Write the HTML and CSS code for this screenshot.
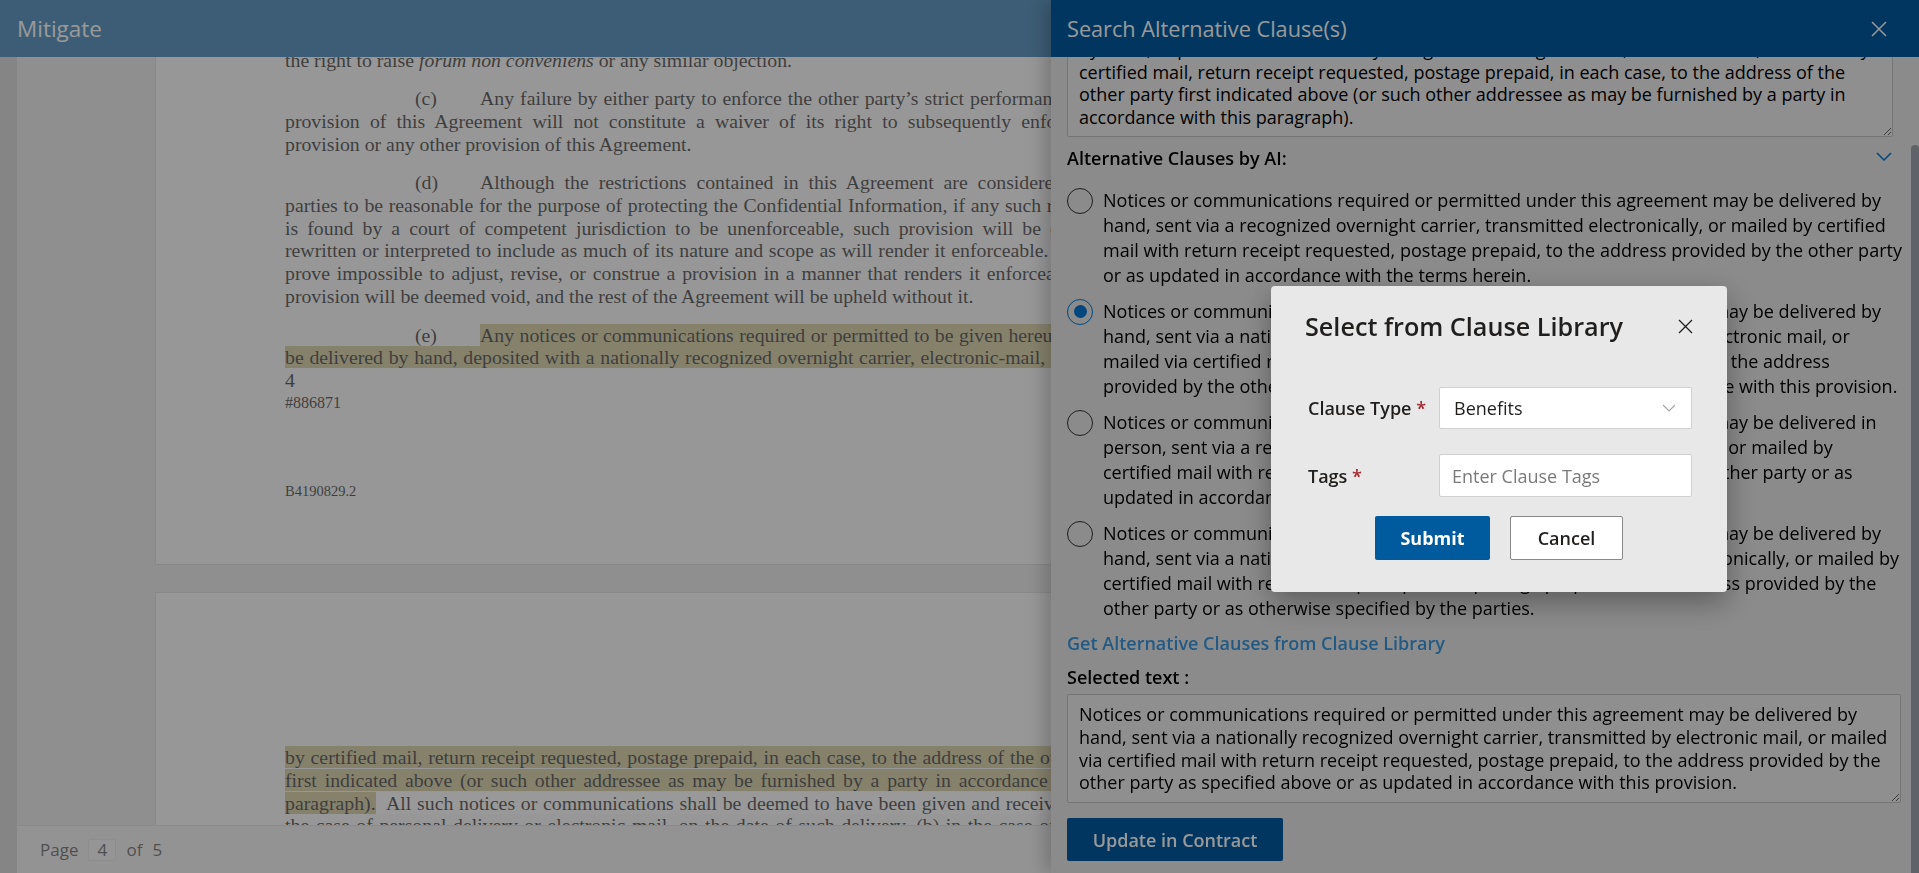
FILE: index.html
```html
<!DOCTYPE html>
<html lang="en">
<head>
<meta charset="utf-8">
<title>Mitigate</title>
<link rel="stylesheet" href="styles.css">
</head>
<body>
<div class="app">
  <header class="topbar"><span class="brand">Mitigate</span></header>
  <div class="workspace">
    <div class="rail"></div>
    <main class="viewer">
      <div class="pages">
        <div class="scroll">
          <section class="page page-1">
            <div class="para">
              <div class="ln">the right to raise <i>forum non conveniens</i> or any similar objection.</div>
            </div>
            <div class="para">
              <div class="ln j"><span class="num">(c)</span>Any failure by either party to enforce the other party’s strict performance of any</div>
              <div class="ln j">provision of this Agreement will not constitute a waiver of its right to subsequently enforce such</div>
              <div class="ln">provision or any other provision of this Agreement.</div>
            </div>
            <div class="para">
              <div class="ln j"><span class="num">(d)</span>Although the restrictions contained in this Agreement are considered by the</div>
              <div class="ln j">parties to be reasonable for the purpose of protecting the Confidential Information, if any such restriction</div>
              <div class="ln j">is found by a court of competent jurisdiction to be unenforceable, such provision will be construed</div>
              <div class="ln j">rewritten or interpreted to include as much of its nature and scope as will render it enforceable. Should it</div>
              <div class="ln j">prove impossible to adjust, revise, or construe a provision in a manner that renders it enforceable, such</div>
              <div class="ln">provision will be deemed void, and the rest of the Agreement will be upheld without it.</div>
            </div>
            <div class="para">
              <div class="ln j"><span class="num">(e)</span><mark class="hl">Any notices or communications required or permitted to be given hereunder may</mark></div>
              <div class="ln j"><mark class="hl">be delivered by hand, deposited with a nationally recognized overnight carrier, electronic-mail, or mailed</mark></div>
            </div>
            <div class="ln">4</div>
            <div class="ln ref">#886871</div>
            <div class="ln docid">B4190829.2</div>
          </section>
          <section class="page page-2">
            <div class="ln j"><mark class="hl">by certified mail, return receipt requested, postage prepaid, in each case, to the address of the other party</mark></div>
            <div class="ln j"><mark class="hl">first indicated above (or such other addressee as may be furnished by a party in accordance with this</mark></div>
            <div class="ln j"><mark class="hl">paragraph).</mark><span class="sel">&nbsp; All such notices or communications shall be deemed to have been given and received: (a) in</span></div>
            <div class="ln j">the case of personal delivery or electronic mail, on the date of such delivery, (b) in the case of delivery</div>
          </section>
        </div>
      </div>
      <footer class="pager">
        <span>Page</span>
        <span class="page-box">4</span>
        <span>of</span>
        <span>5</span>
      </footer>
    </main>
  </div>
</div>

<div class="dim-light"></div>

<aside class="panel">
  <div class="panel-head">
    <h2 class="panel-title">Search Alternative Clause(s)</h2>
    <button class="icon-btn" aria-label="Close">
      <svg width="16" height="16" viewBox="0 0 16 16"><path d="M1 1L15 15M15 1L1 15" stroke="#fff" stroke-width="1.5" fill="none"/></svg>
    </button>
  </div>
  <div class="panel-body">
    <div class="panel-scroll">
      <textarea class="clause-box original" readonly>Any notices or communications required or permitted to be given hereunder may be delivered by hand, deposited with a nationally recognized overnight carrier, electronic-mail, or mailed by certified mail, return receipt requested, postage prepaid, in each case, to the address of the other party first indicated above (or such other addressee as may be furnished by a party in accordance with this paragraph).</textarea>

      <div class="section-head">
        <span>Alternative Clauses by AI:</span>
        <svg class="chev" width="16" height="9" viewBox="0 0 16 9"><path d="M1 1L8 8L15 1" stroke="#0078d4" stroke-width="1.5" fill="none"/></svg>
      </div>

      <div class="options">
        <div class="option">
          <span class="radio"></span>
          <span class="option-text">Notices or communications required or permitted under this agreement may be delivered by hand, sent via a recognized overnight carrier, transmitted electronically, or mailed by certified mail with return receipt requested, postage prepaid, to the address provided by the other party or as updated in accordance with the terms herein.</span>
        </div>
        <div class="option">
          <span class="radio checked"></span>
          <span class="option-text">Notices or communications required or permitted under this agreement may be delivered by hand, sent via a nationally recognized overnight carrier, transmitted by electronic mail, or mailed via certified mail with return receipt requested, postage prepaid, to the address provided by the other party as specified above or as updated in accordance with this provision.</span>
        </div>
        <div class="option">
          <span class="radio"></span>
          <span class="option-text">Notices or communications required or permitted under this agreement may be delivered in person, sent via a recognized overnight courier, transmitted electronically, or mailed by certified&nbsp;mail with return receipt requested, postage prepaid, to the said other party or as updated in accordance with this agreement.</span>
        </div>
        <div class="option">
          <span class="radio"></span>
          <span class="option-text">Notices or communications required or permitted under this agreement may be delivered by hand, sent via a nationally recognized overnight carrier, transmitted electronically, or mailed by certified mail with return receipt requested, postage prepaid, to the address provided by the other party or as otherwise specified by the parties.</span>
        </div>
      </div>

      <a class="library-link">Get Alternative Clauses from Clause Library</a>
      <div class="field-label">Selected text :</div>
      <textarea class="clause-box selected" readonly>Notices or communications required or permitted under this agreement may be delivered by hand, sent via a nationally recognized overnight carrier, transmitted by electronic mail, or mailed via certified mail with return receipt requested, postage prepaid, to the address provided by the other party as specified above or as updated in accordance with this provision.</textarea>
      <button class="btn-primary update">Update in Contract</button>
    </div>
    <div class="scrollbar"></div>
  </div>
</aside>

<div class="dim-dark"></div>

<div class="modal" role="dialog" aria-labelledby="modal-title">
  <div class="modal-head">
    <h3 class="modal-title" id="modal-title">Select from Clause Library</h3>
    <button class="icon-btn" aria-label="Close">
      <svg width="15" height="15" viewBox="0 0 15 15"><path d="M1 1L14 14M14 1L1 14" stroke="#201f1e" stroke-width="1.3" fill="none"/></svg>
    </button>
  </div>
  <div class="form">
    <label class="form-label">Clause Type <span class="req">*</span></label>
    <div class="select">
      <span>Benefits</span>
      <svg width="14" height="8" viewBox="0 0 14 8"><path d="M1 1L7 7L13 1" stroke="#a6a6a6" stroke-width="1.2" fill="none"/></svg>
    </div>
    <label class="form-label">Tags <span class="req">*</span></label>
    <input class="input" type="text" placeholder="Enter Clause Tags">
  </div>
  <div class="actions">
    <button class="btn-primary submit">Submit</button>
    <button class="btn-default cancel">Cancel</button>
  </div>
</div>
</body>
</html>
```

FILE: styles.css
```css
* { box-sizing: border-box; }

html, body {
  margin: 0;
  height: 100%;
}

body {
  font-family: "Open Sans", "Noto Sans", sans-serif;
  overflow: hidden;
  background: #e6e6e6;
  color: #000;
}

button, input, textarea {
  font-family: inherit;
}

/* ---------- application ---------- */
.app {
  height: 100vh;
  display: flex;
  flex-direction: column;
}

.topbar {
  height: 57px;
  flex: none;
  background: #005a9e;
  display: flex;
  align-items: center;
  padding-left: 17px;
}

.brand {
  color: #fff;
  font-size: 22.5px;
}

.workspace {
  flex: 1;
  display: flex;
  min-height: 0;
}

.rail {
  width: 17px;
  flex: none;
  background: #c8c8c8;
}

.viewer {
  flex: 1;
  min-width: 0;
  display: flex;
  flex-direction: column;
  background: #e4e4e4;
}

.pages {
  flex: 1;
  min-height: 0;
  overflow: hidden;
}

.scroll {
  margin-top: -60px;
  padding-left: 138px;
}

.page {
  width: 1102px;
  background: #fafafa;
  border: 1px solid #d0d0d0;
  padding-left: 129px;
  font-family: "Liberation Serif", "Times New Roman", serif;
  font-size: 19.8px;
  line-height: 22.7px;
  color: #000;
}

.page-1 {
  padding-top: 50.65px;
  padding-bottom: 61px;
}

.page-2 {
  margin-top: 27px;
  padding-top: 153.35px;
  height: 1426px;
}

.para + .para { margin-top: 16px; }

.ln {
  width: 842px;
  height: 22.7px;
  overflow: hidden;
}

.j {
  text-align: justify;
  text-align-last: justify;
}

.num {
  display: inline-block;
  margin-left: 130px;
  width: 65px;
  text-align: left;
  text-align-last: left;
}

.hl {
  background: #cbbf80;
  color: inherit;
}

.sel { background: #fff; }

.ref { font-size: 16px; }

.docid {
  font-size: 14.5px;
  margin-top: 65.9px;
}

.pager {
  height: 48px;
  flex: none;
  background: #f0f0f0;
  border-top: 1px solid #d8d8d8;
  display: flex;
  align-items: center;
  gap: 10px;
  padding-left: 23px;
  font-size: 17px;
  color: #323130;
}

.page-box {
  width: 28px;
  height: 22px;
  display: flex;
  align-items: center;
  justify-content: center;
  background: #f4f4f4;
  border: 1px solid #e0e0e0;
  border-radius: 2px;
}

/* ---------- overlays ---------- */
.dim-light {
  position: fixed;
  inset: 0;
  background: rgba(255, 255, 255, 0.4);
  z-index: 1;
}

.dim-dark {
  position: fixed;
  inset: 0;
  background: rgba(0, 0, 0, 0.4);
  z-index: 3;
}

/* ---------- side panel ---------- */
.panel {
  position: fixed;
  top: 0;
  right: 0;
  bottom: 0;
  width: 868px;
  background: #e8e8e8;
  box-shadow: -6px 0 18px rgba(0, 0, 0, 0.22);
  display: flex;
  flex-direction: column;
  z-index: 2;
}

.panel-head {
  height: 57px;
  flex: none;
  background: #005a9e;
  display: flex;
  align-items: center;
  justify-content: space-between;
  padding: 0 32px 0 16px;
}

.panel-title {
  margin: 0;
  font-size: 21.7px;
  font-weight: 400;
  color: #fff;
}

.icon-btn {
  border: 0;
  padding: 0;
  background: none;
  display: flex;
}

.panel-body {
  flex: 1;
  position: relative;
  overflow: hidden;
}

.panel-scroll {
  margin-top: -50.5px;
  padding-left: 16px;
  font-size: 18px;
  line-height: 22.5px;
}

.clause-box {
  display: block;
  font-size: 18px;
  line-height: 22.5px;
  color: #000;
  background: #efefef;
  border: 1px solid #c4c4c4;
  border-radius: 2px;
  padding: 8px 14px 8px 11px;
  resize: vertical;
  overflow: hidden;
  outline: none;
}

.original {
  width: 826px;
  height: 130.5px;
}

.section-head {
  width: 826px;
  margin-top: 9.75px;
  display: flex;
  justify-content: space-between;
  align-items: center;
  font-weight: 600;
}

.chev {
  margin-top: -4px;
  margin-right: 1px;
}

.options {
  margin-top: 19px;
  width: 842px;
}

.option {
  display: flex;
  gap: 10px;
  margin-bottom: 11px;
  line-height: 25px;
}

.radio {
  position: relative;
  flex: none;
  width: 26px;
  height: 26px;
  margin-top: -0.5px;
  border: 1.5px solid #323130;
  border-radius: 50%;
  background: transparent;
}

.radio.checked { border-color: #0078d4; }

.radio.checked::after {
  content: "";
  position: absolute;
  inset: 5.5px;
  border-radius: 50%;
  background: #0078d4;
}

.library-link {
  display: block;
  margin-top: 4px;
  font-weight: 600;
  color: #3a96dd;
  cursor: pointer;
}

.field-label {
  margin-top: 11px;
  font-weight: 600;
}

.selected {
  width: 834px;
  height: 109px;
  margin-top: 6px;
  line-height: 22.7px;
  padding-right: 10px;
}

.btn-primary {
  border: 0;
  border-radius: 2px;
  background: #005a9e;
  color: #fff;
  font-size: 18px;
  font-weight: 600;
}

.update {
  margin-top: 15px;
  width: 216px;
  height: 43px;
  display: block;
}

.scrollbar {
  position: absolute;
  right: 0;
  top: 88px;
  bottom: 0;
  width: 8px;
  background: #9ea6b0;
  border-radius: 4px 4px 0 0;
}

/* ---------- modal ---------- */
.modal {
  position: fixed;
  left: 1271px;
  top: 286px;
  width: 456px;
  height: 306px;
  background: #e8e8e8;
  border-radius: 4px;
  box-shadow: 0 10px 30px rgba(0, 0, 0, 0.35);
  padding: 23px 34px 0 34px;
  z-index: 4;
}

.modal-head {
  height: 34px;
  display: flex;
  align-items: center;
  justify-content: space-between;
}

.modal-title {
  margin: 0;
  font-size: 25.2px;
  line-height: 34px;
  font-weight: 600;
  color: #201f1e;
}

.form {
  margin-top: 44px;
  display: grid;
  grid-template-columns: 134px 253px;
  row-gap: 25px;
  align-items: center;
}

.form-label {
  padding-left: 3px;
  font-size: 18px;
  font-weight: 600;
  color: #201f1e;
}

.req { color: #a4262c; }

.select {
  height: 42px;
  background: #fff;
  border: 1px solid #d0d0d0;
  border-radius: 2px;
  display: flex;
  align-items: center;
  justify-content: space-between;
  padding: 0 15px 0 14px;
  font-size: 18px;
  color: #201f1e;
}

.input {
  height: 43px;
  width: 100%;
  background: #fff;
  border: 1px solid #d0d0d0;
  border-radius: 2px;
  padding: 0 12px;
  font-size: 18px;
  outline: none;
}

.input::placeholder { color: #7a7a7a; }

.actions {
  margin-top: 19px;
  display: flex;
  justify-content: center;
  gap: 20px;
}

.submit {
  width: 115px;
  height: 44px;
  font-weight: 700;
}

.btn-default {
  width: 113px;
  height: 44px;
  background: #fff;
  border: 1px solid #8a8886;
  border-radius: 2px;
  color: #201f1e;
  font-size: 18px;
  font-weight: 600;
}
```
